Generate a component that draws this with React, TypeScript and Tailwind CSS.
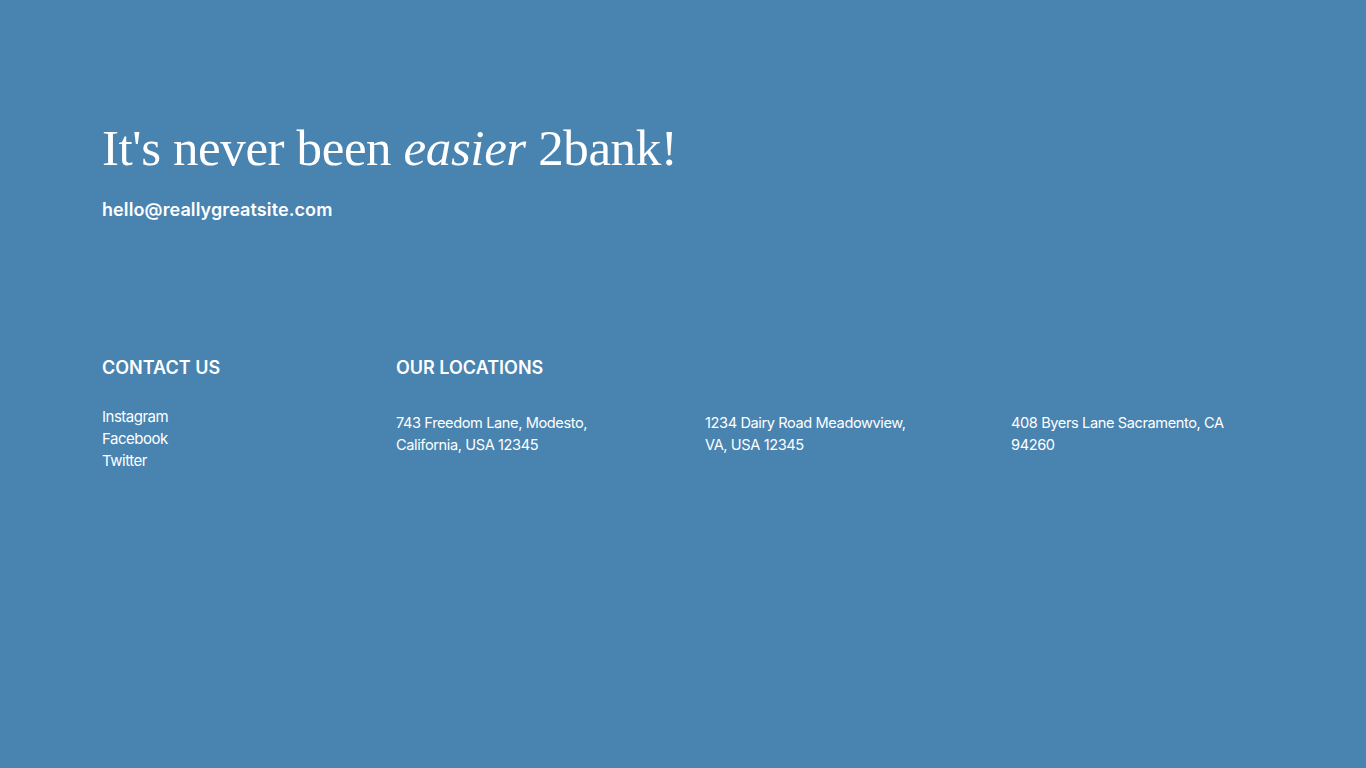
export default function App() {
  return (
    <div className="w-[1366px] h-[768px] bg-[#4983b0] text-white overflow-hidden" style={{ fontFamily: "Inter, 'Noto Sans', sans-serif" }}>
      <div className="pl-[102px] pt-[118px]">
        <h1 className="text-[51px] leading-[60px] tracking-[-0.4px]" style={{ fontFamily: "'Liberation Serif', 'DejaVu Serif', serif" }}>
          It's never been <em className="italic">easier</em> 2bank!
        </h1>
        <p className="mt-[21px] text-[18px] leading-[22px] font-semibold tracking-[0.1px]">hello@reallygreatsite.com</p>
        <div className="mt-[136px] flex">
          <div className="w-[294px]">
            <h2 className="text-[18px] leading-[22px] font-semibold">CONTACT US</h2>
            <ul className="mt-[27px] text-[15px] leading-[22px] tracking-[-0.5px]">
              <li>Instagram</li>
              <li>Facebook</li>
              <li>Twitter</li>
            </ul>
          </div>
          <div>
            <h2 className="text-[18px] leading-[22px] font-semibold">OUR LOCATIONS</h2>
            <div className="mt-[33px] flex text-[14.6px] leading-[22px] tracking-[-0.4px]">
              <p className="w-[309px]">743 Freedom Lane, Modesto,<br />California, USA 12345</p>
              <p className="w-[306px]">1234 Dairy Road Meadowview,<br />VA, USA 12345</p>
              <p className="w-[240px]">408 Byers Lane Sacramento, CA<br />94260</p>
            </div>
          </div>
        </div>
      </div>
    </div>
  );
}
